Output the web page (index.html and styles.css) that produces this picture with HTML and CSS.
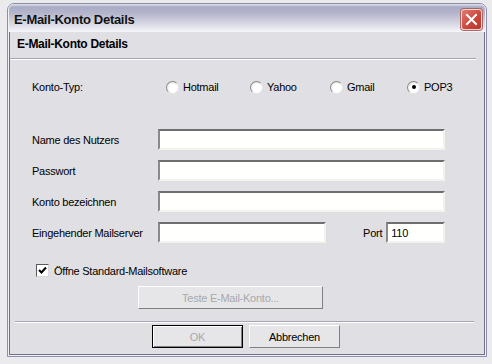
FILE: index.html
```html
<!DOCTYPE html>
<html lang="de">
<head>
    <meta charset="UTF-8">
    <title>E-Mail-Konto Details</title>
    <link rel="stylesheet" href="styles.css">
</head>
<body>
    <div class="window">
        <!-- Title bar -->
        <div class="titlebar">
            <span class="title">E-Mail-Konto Details</span>
            <div class="close">
                <svg width="13" height="13" viewBox="0 0 13 13">
                    <path d="M2 2 L11 11 M11 2 L2 11" stroke="#fff" stroke-width="2" stroke-linecap="square"/>
                </svg>
            </div>
        </div>

        <div class="client">
            <div class="header">E-Mail-Konto Details</div>
            <div class="sep"></div>

            <!-- Account type -->
            <div class="type-row">
                <span class="label">Konto-Typ:</span>
                <span class="option"><span class="radio"></span>Hotmail</span>
                <span class="option"><span class="radio"></span>Yahoo</span>
                <span class="option"><span class="radio"></span>Gmail</span>
                <span class="option"><span class="radio checked"></span>POP3</span>
            </div>

            <!-- Fields -->
            <div class="fields">
                <span class="label">Name des Nutzers</span>
                <div class="input wide"></div>
                <span class="label">Passwort</span>
                <div class="input wide"></div>
                <span class="label">Konto bezeichnen</span>
                <div class="input wide"></div>
                <span class="label">Eingehender Mailserver</span>
                <div class="server-row">
                    <div class="input server"></div>
                    <span class="port-label">Port</span>
                    <div class="input port">110</div>
                </div>
            </div>

            <div class="check-row">
                <span class="checkbox">
                    <svg width="9" height="9" viewBox="0 0 9 9">
                        <path d="M1 4 L3.5 6.5 L8 1.5" fill="none" stroke="#000" stroke-width="2"/>
                    </svg>
                </span>
                Öffne Standard-Mailsoftware
            </div>

            <div class="test-row">
                <div class="button disabled test">Teste E-Mail-Konto...</div>
            </div>

            <div class="sep bottom"></div>

            <div class="buttons">
                <div class="button disabled default">OK</div>
                <div class="button">Abbrechen</div>
            </div>
        </div>
    </div>
</body>
</html>
```

FILE: styles.css
```css
/* Reset */
* {
    margin: 0;
    padding: 0;
    box-sizing: border-box;
}
body {
    font-family: 'Liberation Sans', Arial, sans-serif;
    font-size: 11px;
    letter-spacing: -0.25px;
    color: #000;
    background: #ebebee;
    padding: 3px 0 0 7px;
}
/* Window frame */
.window {
    width: 480px;
    border: 1px solid #8d8ea8;
    border-radius: 7px 7px 0 0;
    background: #f2f2f6;
    padding: 0 1px 1px;
}
.titlebar {
    height: 28px;
    display: flex;
    align-items: center;
    justify-content: space-between;
    padding: 2px 3px 0 5px;
    border-radius: 6px 6px 0 0;
    background: linear-gradient(#e4e4ee 0, #a9abc5 3px, #b6b7cd 35%, #e6e6ee 85%, #f6f6fa 100%);
}
.title {
    font-size: 13px;
    font-weight: bold;
    letter-spacing: -0.3px;
    color: #111;
}
.close {
    width: 21px;
    height: 21px;
    border: 1px solid #f4d4d0;
    border-radius: 3px;
    background: linear-gradient(135deg, #e27a70, #c84438 60%, #b83a30);
    display: flex;
    align-items: center;
    justify-content: center;
    box-shadow: 0 0 0 1px #a66;
}
.client {
    background: #e0dfe3;
    border: 1px solid #6f6f8c;
    border-top: none;
    padding-bottom: 6px;
}
.header {
    height: 26px;
    line-height: 24px;
    padding-left: 7px;
    font-size: 12px;
    font-weight: bold;
    letter-spacing: -0.3px;
}
.sep {
    height: 2px;
    margin-right: 8px;
    border-top: 1px solid #a5a5b5;
    border-bottom: 1px solid #fff;
}
.sep.bottom {
    margin: 12px 10px 0 5px;
}
/* Account type radios */
.type-row {
    display: grid;
    grid-template-columns: 134px 84px 80px 77px auto;
    align-items: center;
    height: 14px;
    margin-top: 20px;
    padding-left: 22px;
}
.option {
    display: flex;
    align-items: center;
    gap: 4px;
}
.radio {
    width: 13px;
    height: 13px;
    border-radius: 50%;
    border: 1px solid;
    border-color: #8a8a8a #e8e8e8 #e8e8e8 #8a8a8a;
    background: radial-gradient(circle at 60% 60%, #fff 40%, #dcdcdc);
    display: flex;
    align-items: center;
    justify-content: center;
}
.radio.checked::after {
    content: "";
    width: 4px;
    height: 4px;
    border-radius: 50%;
    background: #000;
}
/* Text fields */
.fields {
    display: grid;
    grid-template-columns: 126px 287px;
    row-gap: 10px;
    align-items: center;
    margin-top: 35px;
    padding-left: 22px;
}
.input {
    height: 21px;
    background: #fffffd;
    border: 2px solid;
    border-color: #7c7c7c #f2f2ee #f2f2ee #8a8a8a;
    border-top-color: #6e6e6e;
    padding: 2px 3px;
    line-height: 15px;
}
.server-row {
    display: flex;
    align-items: center;
}
.input.server {
    width: 169px;
}
.port-label {
    margin: 0 4px 0 37px;
}
.input.port {
    width: 59px;
}
/* Checkbox */
.check-row {
    display: flex;
    align-items: center;
    gap: 5px;
    height: 13px;
    margin-top: 21px;
    padding-left: 26px;
}
.checkbox {
    width: 13px;
    height: 13px;
    background: #fff;
    border: 1px solid;
    border-color: #5a5a5a #d8d8d8 #d8d8d8 #5a5a5a;
    display: flex;
    align-items: center;
    justify-content: center;
}
/* Buttons */
.test-row {
    margin-top: 9px;
    padding-left: 128px;
}
.button {
    height: 23px;
    width: 91px;
    display: flex;
    align-items: center;
    justify-content: center;
    background: #e6e6e8;
    border: 1px solid;
    border-color: #fff #808080 #808080 #fff;
}
.button.test {
    width: 185px;
}
.button.disabled {
    color: #a8a8ac;
}
.button.default {
    border-color: #000;
    box-shadow: inset 1px 1px 0 #fff, inset -1px -1px 0 #808080;
}
.buttons {
    display: flex;
    gap: 6px;
    margin-top: 2px;
    padding-left: 142px;
}
```
